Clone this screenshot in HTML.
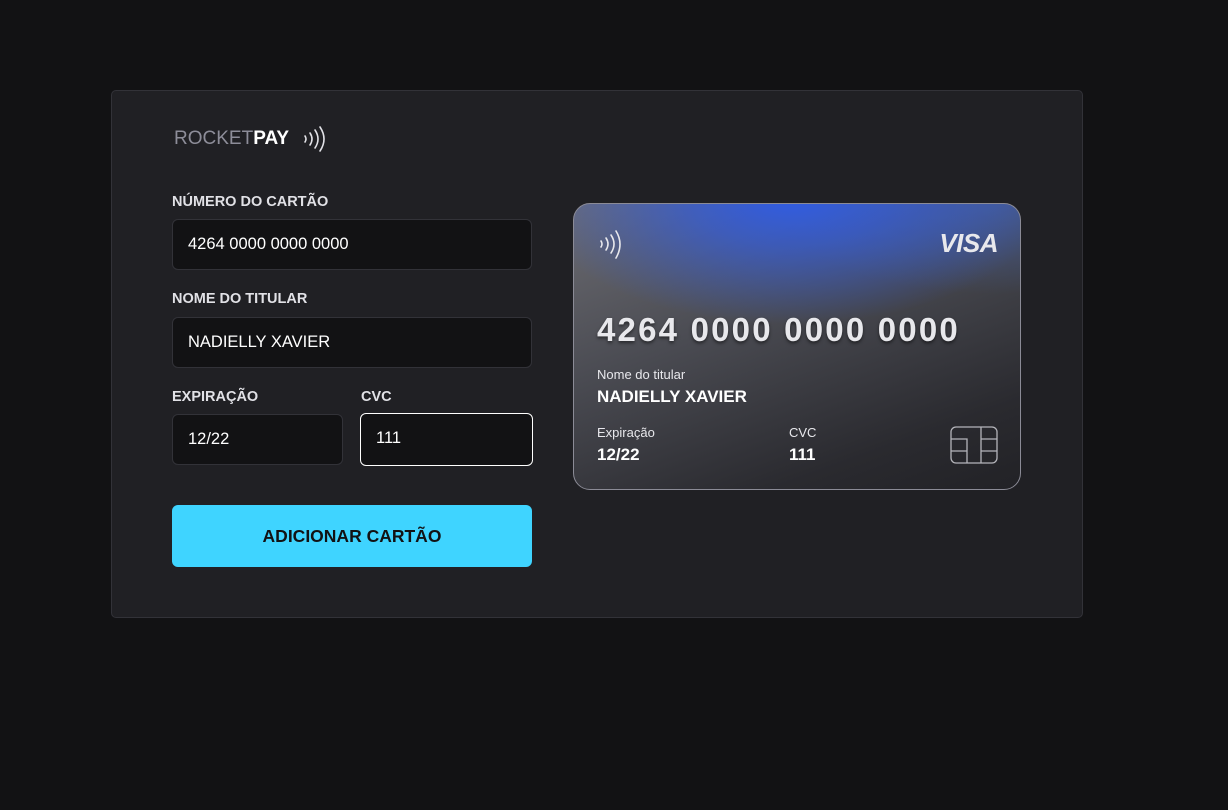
<!DOCTYPE html>
<html><head><meta charset="utf-8"><style>
*{box-sizing:border-box;margin:0;padding:0}
body{width:1228px;height:810px;background:#121214;font-family:"Liberation Sans",sans-serif;position:relative;overflow:hidden}
.panel{position:absolute;left:111px;top:90px;width:972px;height:528px;background:#202024;border:1px solid #323238;border-radius:5px}
.abs{position:absolute}
.logo{left:174px;top:128px;font-size:19px;color:#8d8d99;letter-spacing:0px}
.logo b{color:#fff}
.lbl{font-size:14.5px;font-weight:bold;color:#e1e1e6}
.inp{background:#121214;border:1px solid #323238;border-radius:6px;height:51px;color:#fff;font-size:16.5px;padding-left:15px;line-height:49px}
.btn{left:172px;top:505px;width:360px;height:62px;background:#3fd4ff;border-radius:6px;text-align:center;line-height:62px;font-weight:bold;font-size:17.5px;color:#121214}
.card{left:573px;top:203px;width:448px;height:287px;border-radius:17px;border:1.5px solid #8b8b96;overflow:hidden;
background:radial-gradient(ellipse 260px 130px at 215px -10px,#2f5ce6 0%,rgba(47,92,230,0.65) 40%,rgba(47,92,230,0) 100%),radial-gradient(ellipse 220px 90px at 420px 0px,rgba(60,100,200,0.5) 0%,rgba(60,100,200,0) 100%),linear-gradient(160deg,#6c6c72 0%,#4a4b52 40%,#2a2a2f 80%,#222226 100%)}
.card .t{position:absolute;color:#e8e8ec}
</style></head><body>
<div class="panel"></div>
<div class="abs logo">ROCKET<b>PAY</b></div>
<svg class="abs" style="left:302px;top:126px" width="24" height="26" viewBox="0 0 24 26" fill="none" stroke="#e1e1e6" stroke-width="1.6" stroke-linecap="round"><path d="M3 10q2 3 0 6"/><path d="M8 7q4 6 0 12"/><path d="M13 4q6 9 0 18"/><path d="M18 1q8 12 0 24"/></svg>
<div class="abs lbl" style="left:172px;top:194px">NÚMERO DO CARTÃO</div>
<div class="abs inp" style="left:172px;top:219px;width:360px">4264 0000 0000 0000</div>
<div class="abs lbl" style="left:172px;top:291px">NOME DO TITULAR</div>
<div class="abs inp" style="left:172px;top:317px;width:360px">NADIELLY XAVIER</div>
<div class="abs lbl" style="left:172px;top:389px">EXPIRAÇÃO</div>
<div class="abs lbl" style="left:361px;top:389px">CVC</div>
<div class="abs inp" style="left:172px;top:414px;width:171px">12/22</div>
<div class="abs inp" style="left:360px;top:413px;width:173px;height:53px;border-color:#fff">111</div>
<div class="abs btn">ADICIONAR CARTÃO</div>
<div class="abs card">
<svg style="position:absolute;left:24px;top:26px" width="24" height="30" viewBox="0 0 24 30" fill="none" stroke="#e8e8ec" stroke-width="1.6" stroke-linecap="round"><path d="M3 11q2 3 0 6"/><path d="M8 8q4 6 0 12"/><path d="M13 5q6 9 0 18"/><path d="M18 1q8 13 0 27"/></svg>
<div class="t" style="right:22px;top:24px;font-size:26px;font-weight:bold;font-style:italic;letter-spacing:-0.5px">VISA</div>
<div class="t" style="left:23px;top:107px;font-size:33px;font-weight:bold;letter-spacing:2.2px;text-shadow:0 2px 3px rgba(0,0,0,.5)">4264 0000 0000 0000</div>
<div class="t" style="left:23px;top:163px;font-size:13px">Nome do titular</div>
<div class="t" style="left:23px;top:183px;font-size:17px;font-weight:bold;color:#fff">NADIELLY XAVIER</div>
<div class="t" style="left:23px;top:221px;font-size:13px">Expiração</div>
<div class="t" style="left:23px;top:241px;font-size:17px;font-weight:bold;color:#fff">12/22</div>
<div class="t" style="left:215px;top:221px;font-size:13px">CVC</div>
<div class="t" style="left:215px;top:241px;font-size:17px;font-weight:bold;color:#fff">111</div>
<svg style="position:absolute;left:376px;top:222px" width="48" height="38" viewBox="0 0 48 38" fill="none" stroke="#b5b5bb" stroke-width="1.3"><rect x="1" y="1" width="46" height="36" rx="5"/><path d="M1 13h16v24M1 25h16M31 1v36M31 13h16M31 25h16"/></svg>
</div>
</body></html>
